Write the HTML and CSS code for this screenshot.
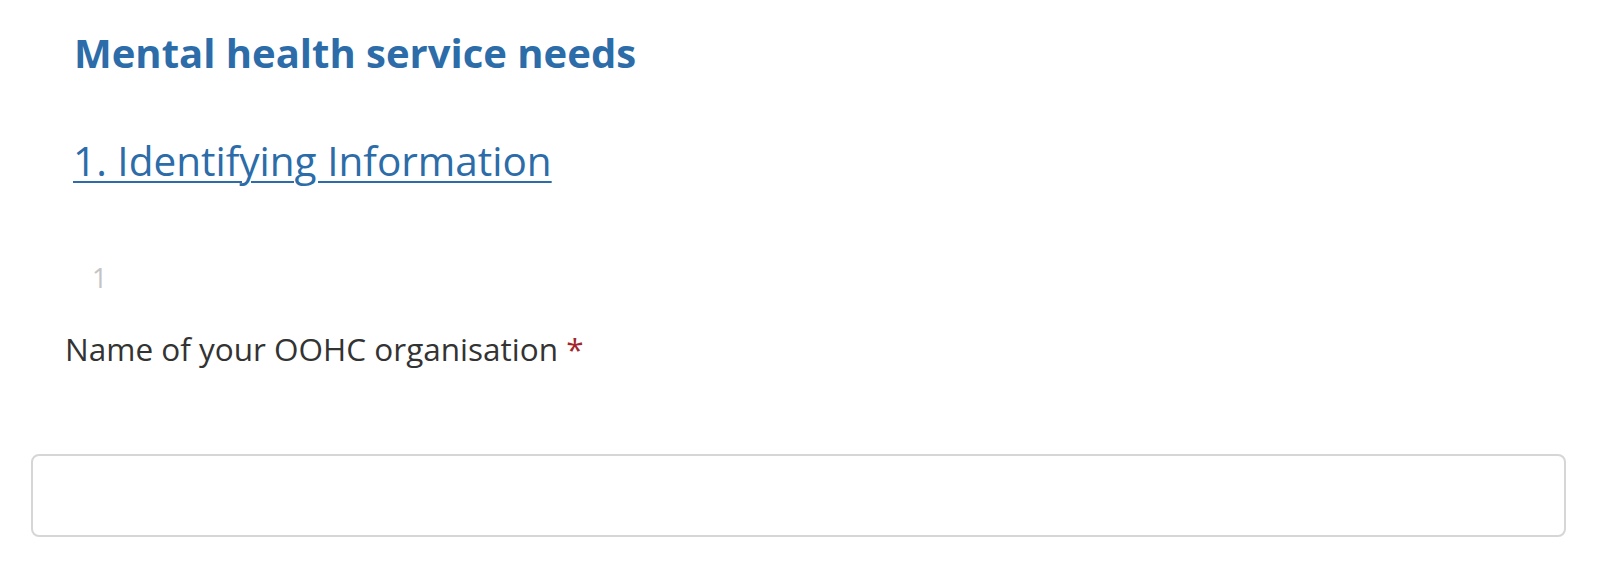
FILE: index.html
```html
<!DOCTYPE html>
<html>
<head>
<meta charset="utf-8">
<link rel="stylesheet" href="styles.css">
</head>
<body>
<main class="form">
  <h1 class="form-title">Mental health service needs</h1>
  <h2 class="section-title"><a href="#">1. Identifying Information</a></h2>
  <div class="question">
    <div class="question-number">1</div>
    <div class="question-label">Name of your OOHC organisation <span class="required">*</span></div>
    <input class="text-input" type="text" aria-label="Name of your OOHC organisation">
  </div>
</main>
</body>
</html>
```
FILE: styles.css
```css
html, body {
  margin: 0;
  padding: 0;
  background: #ffffff;
}
body {
  font-family: "Open Sans", "Noto Sans", sans-serif;
}
.form {
  display: flex;
  flex-direction: column;
  padding: 0 34px 0 31px;
}
.form-title {
  margin: 0;
  padding: 28px 0 0 43px;
  font-size: 40px;
  line-height: 50px;
  font-weight: 700;
  color: #2b6ca9;
}
.section-title {
  margin: 0;
  padding: 58px 0 0 42px;
  font-size: 40.5px;
  line-height: 50px;
  font-weight: 400;
}
.section-title a {
  color: #2b6ca9;
  text-decoration: underline;
  text-decoration-thickness: 2px;
  text-underline-offset: 5px;
}
.question {
  display: flex;
  flex-direction: column;
}
.question-number {
  padding: 72px 0 0 61px;
  font-size: 27px;
  line-height: 40px;
  color: #c4c4c4;
}
.question-label {
  padding: 31px 0 0 34px;
  font-size: 31.5px;
  line-height: 40px;
  color: #333333;
}
.required {
  color: #a4262c;
}
.text-input {
  margin-top: 85px;
  height: 83px;
  box-sizing: border-box;
  border: 2px solid #d6d6d6;
  border-radius: 8px;
  background: #ffffff;
  outline: none;
}
```
